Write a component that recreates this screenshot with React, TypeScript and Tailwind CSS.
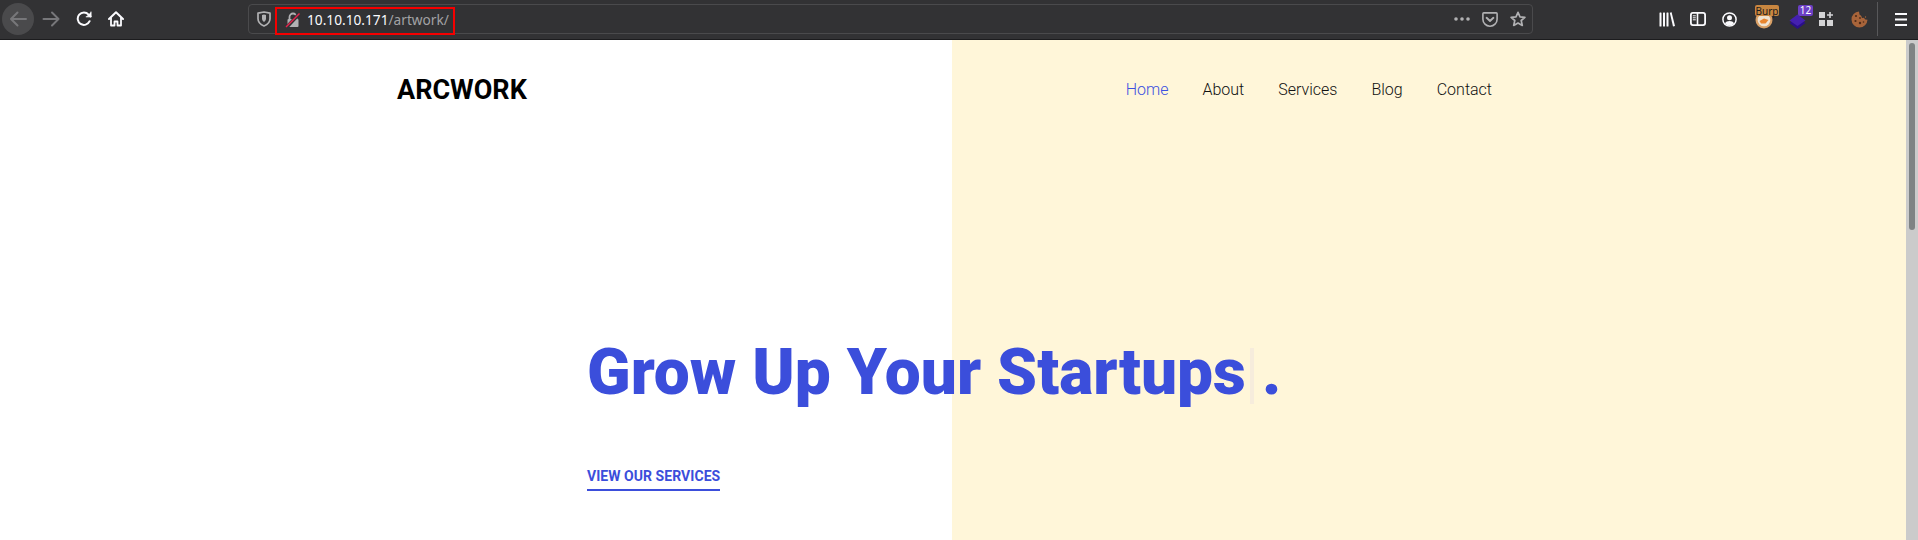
import React from "react";

const Back = () => (
  <svg width="32" height="32" viewBox="0 0 32 32" fill="none" stroke="#77777a" strokeWidth="2" strokeLinecap="round" strokeLinejoin="round">
    <path d="M9 16h15M15.5 9.5 9 16l6.5 6.5" />
  </svg>
);
const Forward = () => (
  <svg width="18" height="16" viewBox="0 0 18 16" fill="none" stroke="#77777a" strokeWidth="2" strokeLinecap="round" strokeLinejoin="round">
    <path d="M1.5 8h15M10 1.5 16.5 8 10 14.5" />
  </svg>
);
const Reload = () => (
  <svg width="16" height="16" viewBox="0 0 16 16" fill="none" stroke="#fbfbfe" strokeWidth="2" strokeLinecap="round" strokeLinejoin="round">
    <path d="M13.6 10.2A6.2 6.2 0 1 1 12.6 3.6L14.6 5.5" />
    <path d="M15 1v4.8h-4.8" fill="#fbfbfe" strokeWidth="1" />
  </svg>
);
const Home = () => (
  <svg width="16" height="16" viewBox="0 0 16 16" fill="none" stroke="#fbfbfe" strokeWidth="2" strokeLinejoin="round" strokeLinecap="round">
    <path d="M1 8 8 1.3 15 8" />
    <path d="M3 7v7.5h3.5V10.5h3v4H13V7" strokeWidth="1.8" />
  </svg>
);
const Shield = () => (
  <svg width="14" height="16" viewBox="0 0 14 16" fill="none" stroke="#b1b1b3" strokeWidth="1.7" strokeLinejoin="round">
    <path d="M1 2.2 7 1l6 1.2v5.6c0 3.4-2.6 5.8-6 7.2-3.4-1.4-6-3.8-6-7.2z" />
    <path d="M7 3.5 5 4v3.5c0 1.5.8 2.6 2 3.5z" fill="#b1b1b3" stroke="none" />
    <path d="M7 3.5 9 4v3.5c0 1.5-.8 2.6-2 3.5z" fill="#b1b1b3" stroke="none" />
  </svg>
);
const LockStruck = () => (
  <svg width="16" height="16" viewBox="0 0 16 16" fill="none">
    <path d="M4.5 7V5a3.5 3.5 0 0 1 7 0v2" stroke="#b1b1b3" strokeWidth="1.8" />
    <rect x="2.5" y="7" width="11" height="8" rx="1" fill="#b1b1b3" />
    <path d="M1.5 15.5 14 2" stroke="#323234" strokeWidth="3.4" />
    <path d="M1 15 14.5 1.5" stroke="#e8224d" strokeWidth="1.5" />
  </svg>
);
const Dots = () => (
  <svg width="16" height="4" viewBox="0 0 16 4" fill="#b1b1b3">
    <circle cx="2" cy="2" r="1.8" />
    <circle cx="8" cy="2" r="1.8" />
    <circle cx="14" cy="2" r="1.8" />
  </svg>
);
const Pocket = () => (
  <svg width="16" height="15" viewBox="0 0 16 15" fill="none" stroke="#b1b1b3" strokeWidth="1.6" strokeLinecap="round" strokeLinejoin="round">
    <path d="M1.8.9h12.4c.5 0 .9.4.9.9v5.4A7 7 0 0 1 8 14.2 7 7 0 0 1 .9 7.2V1.8c0-.5.4-.9.9-.9z" />
    <path d="m4.6 5.8 3.4 3.2 3.4-3.2" strokeWidth="1.9" />
  </svg>
);
const Star = () => (
  <svg width="16" height="16" viewBox="0 0 16 16" fill="none" stroke="#b1b1b3" strokeWidth="1.7" strokeLinejoin="round">
    <path d="m8 1.3 2 4.5 4.9.5-3.7 3.2 1.1 4.9L8 12l-4.3 2.4 1.1-4.9L1.100 6.300 6 5.800z" />
  </svg>
);
const Library = () => (
  <svg width="16" height="15" viewBox="0 0 16 15" fill="#fbfbfe">
    <rect x="0.500" y="0.500" width="2" height="14" rx="0.500" />
    <rect x="4" y="0.500" width="2" height="14" rx="0.500" />
    <rect x="7.500" y="0.500" width="2" height="14" rx="0.500" />
    <path d="M10.800.8 12.600.2 16 14l-2 .5z" />
  </svg>
);
const Sidebar = () => (
  <svg width="16" height="14" viewBox="0 0 16 14" fill="none">
    <rect x="0.900" y="0.900" width="14.200" height="12.200" rx="2" stroke="#fbfbfe" strokeWidth="1.800" />
    <path d="M7.500 1v12" stroke="#fbfbfe" strokeWidth="1.600" />
    <path d="M2.800 3.800h3M2.800 5.800h3M2.800 7.800h3" stroke="#fbfbfe" strokeWidth="1" />
  </svg>
);
const Profile = () => (
  <svg width="15" height="15" viewBox="0 0 15 15" fill="none">
    <circle cx="7.500" cy="7.500" r="6.600" stroke="#fbfbfe" strokeWidth="1.500" />
    <circle cx="7.500" cy="5.800" r="2.500" fill="#fbfbfe" />
    <path d="M3 11.400c.8-1.600 2.500-2.300 4.500-2.300s3.700.7 4.500 2.300c-1 1.200-2.700 2-4.500 2s-3.500-.8-4.500-2z" fill="#fbfbfe" />
  </svg>
);
const BurpIcon = () => (
  <svg width="18" height="18" viewBox="0 0 18 18">
    <circle cx="9" cy="9" r="8.500" fill="#d9a066" />
    <circle cx="9" cy="9" r="6.300" fill="#efe3d2" />
    <path d="M4.500 10 9 7.500l4.500 1.500-3 3.500H6z" fill="#e8852e" />
  </svg>
);
const Layers = () => (
  <svg width="17" height="17" viewBox="0 0 17 17">
    <path d="M0.500 10 8.500 5l8 5-8 6z" fill="#2a0f8a" />
    <path d="M0.500 7.500 8.500 1.500l8 6-8 5.500z" fill="#4420b0" />
  </svg>
);
const Extensions = () => (
  <svg width="14" height="14" viewBox="0 0 14 14" fill="#d4d4d6">
    <rect x="0" y="0" width="6" height="6" />
    <rect x="0" y="8" width="6" height="6" />
    <rect x="8" y="8" width="6" height="6" />
    <path d="M10.200 0h1.600v2.200H14v1.600h-2.200V6h-1.600V3.800H8V2.200h2.200z" />
  </svg>
);
const Cookie = () => (
  <svg width="17" height="17" viewBox="0 0 17 17">
    <path d="M8 .5a8 8 0 1 0 8.500 8.300l-2.200-.3-1.500-1.800-1.800.2-.7-2L8.500 3.500z" fill="#a8643a" />
    <circle cx="5" cy="5" r="1.100" fill="#4e2c18" />
    <circle cx="9" cy="7" r="0.900" fill="#4e2c18" />
    <circle cx="4.500" cy="10" r="1.100" fill="#4e2c18" />
    <circle cx="9" cy="12" r="1.200" fill="#4e2c18" />
    <circle cx="12.500" cy="11" r="0.800" fill="#4e2c18" />
    <circle cx="14.500" cy="6" r="0.700" fill="#a8643a" />
  </svg>
);
const Hamburger = () => (
  <svg width="12" height="13" viewBox="0 0 12 13" fill="#fbfbfe">
    <rect width="12" height="2" y="0" />
    <rect width="12" height="2" y="5.500" />
    <rect width="12" height="2" y="11" />
  </svg>
);

export default function App() {
  return (
    <div className="flex h-[540px] w-[1918px] flex-col overflow-hidden bg-white font-['Roboto',sans-serif]">
      {/* browser toolbar */}
      <div className="flex h-10 shrink-0 items-center border-b border-[#1c1c1e] bg-[#323234] pb-[1px]">
        <div className="ml-[2px] flex h-8 w-8 items-center justify-center rounded-full bg-[#4a4a4c]">
          <Back />
        </div>
        <div className="ml-[8px] flex w-[18px] justify-center"><Forward /></div>
        <div className="ml-[16px] w-4"><Reload /></div>
        <div className="ml-[16px] w-4"><Home /></div>

        <div className="ml-[124px] flex h-[30px] w-[1285px] items-center rounded-[4px] border border-[#4a4a4c] bg-[#323234]">
          <div className="ml-[8px] w-[14px]"><Shield /></div>
          <div className="ml-[4px] flex h-[28px] w-[180px] translate-y-[2px] items-center border-2 border-[#f50000]">
            <div className="ml-[8px] w-4 translate-y-[-1px]"><LockStruck /></div>
            <div className="ml-[6px] translate-y-[-1px] whitespace-nowrap font-['Noto_Sans',sans-serif] text-[13.7px] text-[#fbfbfe]">
              10.10.10.171<span className="text-[#a2a2a5]">/artwork/</span>
            </div>
          </div>
          <div className="ml-auto flex items-center">
            <Dots />
            <div className="ml-[12px] w-4"><Pocket /></div>
            <div className="ml-[12px] mr-[6px] w-4"><Star /></div>
          </div>
        </div>

        <div className="ml-[126px] w-4"><Library /></div>
        <div className="ml-[15px] w-4"><Sidebar /></div>
        <div className="ml-[16px] w-[15px]"><Profile /></div>

        <div className="relative ml-[18px] h-[18px] w-[18px] translate-y-[1px]">
          <BurpIcon />
          <span className="absolute left-0 top-[-6px] flex h-[11px] w-[24px] items-center justify-center rounded-[2px] bg-[#c98640] font-['Noto_Sans',sans-serif] text-[10px] leading-none text-[#1c1c1e]">Burp</span>
        </div>
        <div className="relative ml-[16px] h-[17px] w-[17px] translate-y-[2px]">
          <Layers />
          <span className="absolute left-[9px] top-[-8px] flex h-[11px] w-[15px] items-center justify-center rounded-[2px] bg-[#6b3fc4] font-['Noto_Sans',sans-serif] text-[10px] leading-none text-white">12</span>
        </div>

        <div className="ml-[13px] w-[14px]"><Extensions /></div>
        <div className="ml-[18px] w-[17px]"><Cookie /></div>
        <div className="ml-[9px] h-[34px] w-px bg-[#58585a]" />
        <div className="ml-[17px] w-3"><Hamburger /></div>
      </div>

      {/* page */}
      <div className="flex min-h-0 flex-1">
        <div className="min-w-0 flex-1 bg-[linear-gradient(to_right,#ffffff_952px,#fff6d9_952px)]">
          <header className="flex h-[100px] items-center justify-between pl-[397px] pr-[414px]">
            <div className="text-[27px] font-bold leading-none text-black">ARCWORK</div>
            <nav className="flex items-center gap-[34px] text-[16px] font-light text-[#111111]">
              <a className="text-[#3c50e0]">Home</a>
              <a>About</a>
              <a>Services</a>
              <a>Blog</a>
              <a>Contact</a>
            </nav>
          </header>
          <div className="pl-[587px] pt-[194px]">
            <h1 className="whitespace-nowrap text-[64px] font-black leading-[78px] text-[#3b4edb]">
              Grow Up Your Startups<span className="ml-[4px] mr-[8px] inline-block h-[56px] w-[4px] align-[-10px] bg-[#f6ecdc]" />.
            </h1>
            <a className="mt-[55px] inline-block border-b-2 border-[#3b4edb] pb-[4px] text-[14px] font-bold leading-[18px] tracking-[0.05px] text-[#3b4edb]">
              VIEW OUR SERVICES
            </a>
          </div>
        </div>
        <div className="w-3 shrink-0 bg-[#cbcbcb] pl-[3px] pt-[3px]">
          <div className="h-[187px] w-[6px] rounded-full bg-[#7f8384]" />
        </div>
      </div>
    </div>
  );
}
